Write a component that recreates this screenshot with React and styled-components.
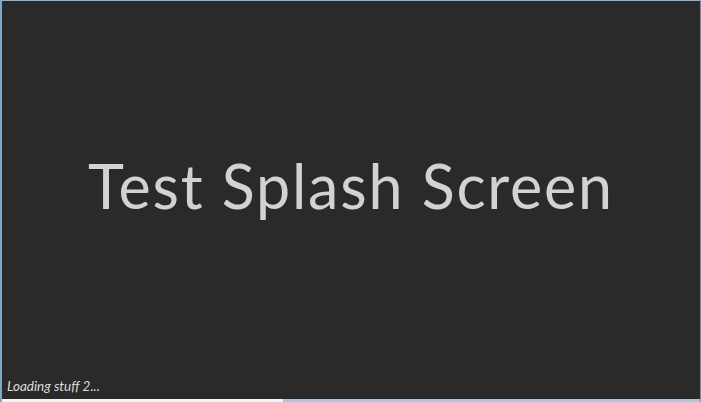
import styled, { createGlobalStyle } from "styled-components";

const GlobalStyle = createGlobalStyle`
  html, body {
    margin: 0;
    padding: 0;
    background: #2a2a2a;
  }
`;

const Window = styled.div`
  box-sizing: border-box;
  width: 701px;
  height: 402px;
  background: #2a2a2a;
  border-top: 1px solid #8fb3cf;
  border-left: 2px solid #7fa7c6;
  border-right: 1px solid #6f92ad;
  display: flex;
  flex-direction: column;
  overflow: hidden;
`;

const Stage = styled.div`
  flex: 1;
  display: flex;
  align-items: center;
  justify-content: center;
  padding-bottom: 8px;
`;

const Title = styled.h1`
  margin: 0;
  font-family: "Lato", "Open Sans", sans-serif;
  font-weight: 400;
  font-size: 61px;
  letter-spacing: 1.8px;
  color: #d2d2d2;
`;

const Status = styled.div`
  font-family: "Lato", "Open Sans", sans-serif;
  font-style: italic;
  font-size: 13.5px;
  color: #dcdcdc;
  padding: 0 0 5px 5px;
`;

const Track = styled.div`
  height: 3px;
  background: #a9c6dc;
  display: flex;
`;

const Fill = styled.div`
  height: 100%;
  background: #f4f4f4;
`;

export default function App() {
  const progress = 0.402;
  return (
    <>
      <GlobalStyle />
      <Window>
        <Stage>
          <Title>Test Splash Screen</Title>
        </Stage>
        <Status>Loading stuff 2...</Status>
        <Track>
          <Fill style={{ width: `${progress * 100}%` }} />
        </Track>
      </Window>
    </>
  );
}
